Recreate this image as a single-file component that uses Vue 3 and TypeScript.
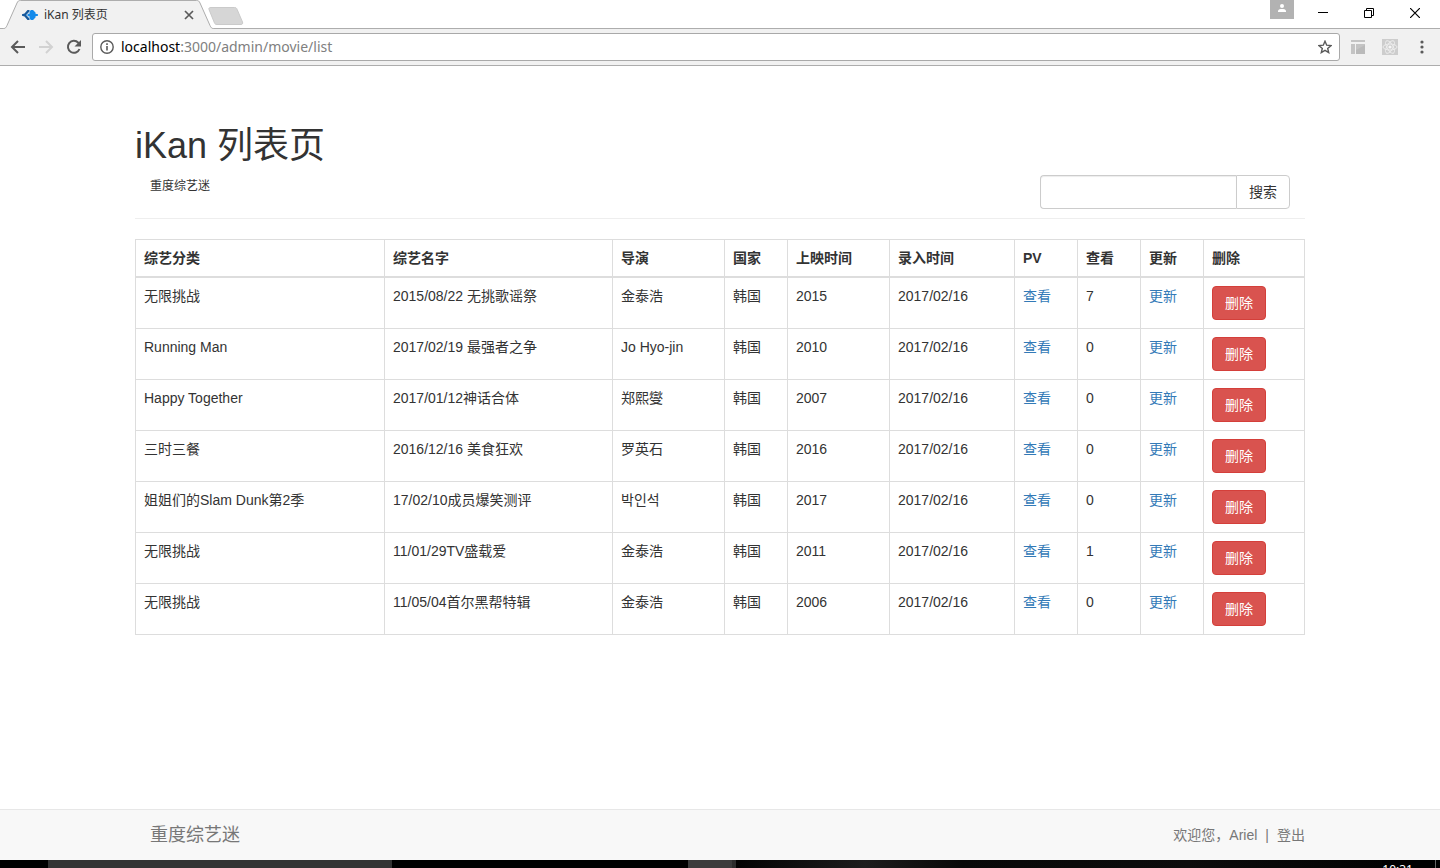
<script setup lang="ts">
import { ref } from 'vue'

interface Movie {
  id: number
  category: string
  name: string
  director: string
  country: string
  year: number
  created: string
  pv: number
}

const headings: string[] = ['综艺分类', '综艺名字', '导演', '国家', '上映时间', '录入时间', 'PV', '查看', '更新', '删除']
const columns: string[] = ['category', 'name', 'director', 'short', 'year', 'created', 'short', 'short', 'short', 'remove']

const movies = ref<Movie[]>([
  { id: 1, category: '无限挑战', name: '2015/08/22 无挑歌谣祭', director: '金泰浩', country: '韩国', year: 2015, created: '2017/02/16', pv: 7 },
  { id: 2, category: 'Running Man', name: '2017/02/19 最强者之争', director: 'Jo Hyo-jin', country: '韩国', year: 2010, created: '2017/02/16', pv: 0 },
  { id: 3, category: 'Happy Together', name: '2017/01/12神话合体', director: '郑熙燮', country: '韩国', year: 2007, created: '2017/02/16', pv: 0 },
  { id: 4, category: '三时三餐', name: '2016/12/16 美食狂欢', director: '罗英石', country: '韩国', year: 2016, created: '2017/02/16', pv: 0 },
  { id: 5, category: '姐姐们的Slam Dunk第2季', name: '17/02/10成员爆笑测评', director: '박인석', country: '韩国', year: 2017, created: '2017/02/16', pv: 0 },
  { id: 6, category: '无限挑战', name: '11/01/29TV盛载爱', director: '金泰浩', country: '韩国', year: 2011, created: '2017/02/16', pv: 1 },
  { id: 7, category: '无限挑战', name: '11/05/04首尔黑帮特辑', director: '金泰浩', country: '韩国', year: 2006, created: '2017/02/16', pv: 0 },
])

const keyword = ref('')

function removeMovie(id: number): void {
  movies.value = movies.value.filter((movie) => movie.id !== id)
}
</script>

<template>
  <div class="screen">
    <header class="browser">
      <div class="tabstrip">
        <div class="tab">
          <svg class="tab-shape" width="214" height="29" viewBox="0 0 214 29" aria-hidden="true">
            <path d="M0 28.500H3.500C5.500 28.500 6 27.500 7 25.500L17 3C18 1 18.500.5 20.500.5H196.500C198.500.5 199 1 200 3L210 25.500C211 27.500 211.500 28.500 213.500 28.500V29H0Z" fill="#f1f1f1" />
            <path d="M0 28.500H3.500C5.500 28.500 6 27.500 7 25.500L17 3C18 1 18.500.5 20.500.5H196.500C198.500.5 199 1 200 3L210 25.500C211 27.500 211.500 28.500 213.500 28.500" fill="none" stroke="#adadad" />
          </svg>
          <div class="tab-content">
            <svg width="16" height="16" viewBox="0 0 16 16" aria-hidden="true">
              <path d="M0 7.200 2.500 6.500 5.500 3H7.500V4.500L4.500 7.500V8.500L7.500 11.500V13H5.500L2.500 9.500 0 8.800Z" fill="#17599c" />
              <path d="M8.800 3H11L13.500 5.500V6.700L16 7.300V8.700L13.500 9.300V10.500L11 13H8.800L7.500 11V9.300H5.500V6.700H7.500V5Z" fill="#148aea" />
            </svg>
            <span class="tab-title">iKan 列表页</span>
            <button class="bare tab-close" type="button" aria-label="Close tab">
              <svg width="10" height="10" viewBox="0 0 10 10"><path d="m1 1 8 8M9 1 1 9" stroke="#5a5a5a" stroke-width="1.700" /></svg>
            </button>
          </div>
        </div>
        <button class="bare new-tab" type="button" aria-label="New tab">
          <svg width="36" height="18" viewBox="0 0 36 18">
            <path d="M3 .5H26.500C28 .5 28.500 1 29 2.200L34.500 15C35 16.500 34.500 17.500 33 17.500H9C7.500 17.500 7 17 6.500 16L1 2.500C.5 1.200 1.200.5 3 .5Z" fill="#d6d6d6" stroke="#cacaca" />
          </svg>
        </button>
        <div class="window-controls">
          <button class="bare profile" type="button" aria-label="Profile">
            <svg width="24" height="19" viewBox="0 0 24 19"><path d="M0 0h24v19H0Z" fill="#b2b2b2" /><circle cx="12" cy="6" r="2" fill="#fff" /><path d="M8 12V10.800C8 9.400 10.500 9 12 9s4 .4 4 1.800V12Z" fill="#fff" /></svg>
          </button>
          <button class="bare window-button" type="button" aria-label="Minimize">
            <svg width="10" height="10" viewBox="0 0 10 10"><path d="M0 4.500h10" stroke="#000" /></svg>
          </button>
          <button class="bare window-button" type="button" aria-label="Restore">
            <svg width="10" height="10" viewBox="0 0 10 10"><path d="M.5 2.500h7v7h-7ZM2.500 2.500v-2h7v7h-2" fill="none" stroke="#000" /></svg>
          </button>
          <button class="bare window-button" type="button" aria-label="Close window">
            <svg width="10" height="10" viewBox="0 0 10 10"><path d="m0 0 10 10M10 0 0 10" stroke="#000" stroke-width="1.200" /></svg>
          </button>
        </div>
      </div>

      <div class="toolbar">
        <button class="bare tool" type="button" aria-label="Back">
          <svg width="16" height="16" viewBox="0 0 16 16"><path d="M15 8H2M8 2 2 8l6 6" fill="none" stroke="#5a5a5a" stroke-width="2" /></svg>
        </button>
        <button class="bare tool" type="button" aria-label="Forward" disabled>
          <svg width="16" height="16" viewBox="0 0 16 16"><path d="M1 8h13M8 2l6 6-6 6" fill="none" stroke="#d2d2d2" stroke-width="2" /></svg>
        </button>
        <button class="bare tool" type="button" aria-label="Reload">
          <svg width="16" height="16" viewBox="0 0 16 16"><path d="M13.500 10A6 6 0 1 1 12.300 3.700L13.500 5" fill="none" stroke="#5a5a5a" stroke-width="2" /><path d="M15 1v6.500H8.500Z" fill="#5a5a5a" /></svg>
        </button>
        <div class="address">
          <svg width="14" height="14" viewBox="0 0 14 14" aria-hidden="true"><circle cx="7" cy="7" r="6.200" fill="none" stroke="#5a5a5a" stroke-width="1.400" /><path d="M6.200 6h1.600v4.500H6.200ZM6.200 3.300h1.600v1.600H6.200Z" fill="#5a5a5a" /></svg>
          <span class="url"><span class="host">localhost</span>:3000/admin/movie/list</span>
          <button class="bare star" type="button" aria-label="Bookmark">
            <svg width="14" height="14" viewBox="0 0 14 14"><path d="m7 1.200 1.700 4 4.300.4-3.300 2.800 1 4.200L7 10.400l-3.700 2.200 1-4.200L1 5.600l4.300-.4Z" fill="none" stroke="#5a5a5a" stroke-width="1.400" /></svg>
          </button>
        </div>
        <button class="bare extension" type="button" aria-label="Layout extension">
          <svg width="14" height="14" viewBox="0 0 14 14"><path d="M0 0h14v2H0ZM0 4h4v10H0ZM5 4h9v10H5Z" fill="#c4c4c4" /><path d="M5 14V10l9-5v9Z" fill="#bababa" /></svg>
        </button>
        <button class="bare extension" type="button" aria-label="React extension">
          <svg width="16" height="16" viewBox="0 0 16 16">
            <path d="M0 0h16v16H0Z" fill="#cdcdcd" />
            <g fill="none" stroke="#ececec"><ellipse cx="8" cy="8" rx="7" ry="3" /><ellipse cx="8" cy="8" rx="7" ry="3" transform="rotate(60 8 8)" /><ellipse cx="8" cy="8" rx="7" ry="3" transform="rotate(120 8 8)" /></g>
            <circle cx="8" cy="8" r="1.600" fill="#f6f6f6" />
          </svg>
        </button>
        <button class="bare extension" type="button" aria-label="Menu">
          <svg width="4" height="14" viewBox="0 0 4 14"><g fill="#5a5a5a"><circle cx="2" cy="2" r="1.600" /><circle cx="2" cy="7" r="1.600" /><circle cx="2" cy="12" r="1.600" /></g></svg>
        </button>
      </div>
    </header>

    <main class="container">
      <div class="page-header">
        <h1>iKan 列表页</h1>
        <div class="subheader">
          <small>重度综艺迷</small>
          <form class="search" @submit.prevent>
            <input v-model="keyword" type="text" aria-label="搜索" />
            <button type="submit">搜索</button>
          </form>
        </div>
      </div>

      <table>
        <colgroup>
          <col v-for="(column, index) in columns" :key="index" :class="`col-${column}`" />
        </colgroup>
        <thead>
          <tr>
            <th v-for="heading in headings" :key="heading" scope="col">{{ heading }}</th>
          </tr>
        </thead>
        <tbody>
          <tr v-for="movie in movies" :key="movie.id">
            <td>{{ movie.category }}</td>
            <td>{{ movie.name }}</td>
            <td>{{ movie.director }}</td>
            <td>{{ movie.country }}</td>
            <td>{{ movie.year }}</td>
            <td>{{ movie.created }}</td>
            <td><a href="#">查看</a></td>
            <td>{{ movie.pv }}</td>
            <td><a href="#">更新</a></td>
            <td><button class="danger" type="button" @click="removeMovie(movie.id)">删除</button></td>
          </tr>
        </tbody>
      </table>
    </main>

    <footer class="navbar">
      <div class="container navbar-inner">
        <a class="brand" href="#">重度综艺迷</a>
        <p class="welcome"><span>欢迎您，Ariel</span><span>|</span><a href="#">登出</a></p>
      </div>
    </footer>

    <div class="taskbar">
      <div class="task-start"></div>
      <div class="task-search"></div>
      <div class="task-gap"></div>
      <div class="task-active"></div>
      <div class="task-rest"></div>
      <time class="clock">10:31</time>
      <div class="show-desktop"></div>
    </div>
  </div>
</template>

<style>
body {
  margin: 0;
  background: #fff;
}
</style>

<style scoped>
* {
  box-sizing: border-box;
}

.screen {
  display: flex;
  flex-direction: column;
  min-height: 100vh;
  color: #333;
  font: 14px/20px "Liberation Sans", "Noto Sans CJK SC", sans-serif;
}

svg {
  display: block;
  flex: none;
}

.bare {
  display: flex;
  align-items: center;
  justify-content: center;
  padding: 0;
  border: 0;
  background: none;
}

.tabstrip {
  display: flex;
  height: 29px;
  background: linear-gradient(#adadad, #adadad) bottom / 100% 1px no-repeat #fff;
}

.tab {
  display: grid;
  width: 214px;
}

.tab-shape,
.tab-content {
  grid-area: 1 / 1;
}

.tab-content {
  display: flex;
  align-items: center;
  gap: 6px;
  padding: 0 20px 0 22px;
  font: 12px/16px "Noto Sans", "Noto Sans CJK SC", sans-serif;
}

.tab-close {
  margin-left: auto;
}

.new-tab {
  align-self: center;
  margin: 3px 0 0 -6px;
}

.window-controls {
  display: flex;
  align-items: flex-start;
  margin-left: auto;
  padding-right: 2px;
}

.profile {
  margin-right: 6px;
}

.window-button {
  width: 46px;
  height: 26px;
}

.toolbar {
  display: flex;
  align-items: center;
  height: 37px;
  padding-left: 4px;
  padding-right: 2px;
  border-bottom: 1px solid #adadad;
  background: #f1f1f1;
}

.tool {
  width: 28px;
  height: 28px;
}

.address {
  display: flex;
  flex: 1;
  align-items: center;
  gap: 7px;
  height: 28px;
  margin: 0 2px 0 4px;
  padding: 0 7px;
  border: 1px solid #a9a9a9;
  border-radius: 3px;
  background: #fff;
}

.url {
  color: #808080;
  font: 14px/20px "Noto Sans", sans-serif;
}

.host {
  color: #000;
}

.star {
  margin-left: auto;
}

.extension {
  width: 32px;
  height: 28px;
}

.container {
  width: 100%;
  max-width: 1200px;
  margin: 0 auto;
  padding: 0 15px;
}

main {
  flex: 1;
}

.page-header {
  margin: 60px 0 20px;
  padding-bottom: 9px;
  border-bottom: 1px solid #eee;
}

h1 {
  margin: 0 0 9px;
  font-size: 36px;
  font-weight: 400;
  line-height: 40px;
}

.subheader {
  display: flex;
  align-items: flex-start;
  justify-content: space-between;
  padding: 0 15px;
}

small {
  font-size: 12px;
  line-height: 22px;
}

.search {
  display: flex;
  width: 250px;
  height: 34px;
}

.search input {
  flex: 1;
  min-width: 0;
  padding: 6px 12px;
  border: 1px solid #ccc;
  border-right: 0;
  border-radius: 4px 0 0 4px;
  box-shadow: inset 0 1px 1px rgba(0, 0, 0, 0.075);
  color: #555;
  font: inherit;
}

.search button {
  padding: 6px 12px;
  border: 1px solid #ccc;
  border-radius: 0 4px 4px 0;
  background: #fff;
  color: #333;
  font: inherit;
}

table {
  width: 100%;
  margin-bottom: 20px;
  border-collapse: collapse;
  table-layout: fixed;
}

.col-name {
  width: 228px;
}

.col-director {
  width: 112px;
}

.col-short {
  width: 63px;
}

.col-year {
  width: 102px;
}

.col-created {
  width: 125px;
}

.col-remove {
  width: 101px;
}

th,
td {
  padding: 8px;
  border: 1px solid #ddd;
  text-align: left;
  vertical-align: top;
}

th {
  border-bottom-width: 2px;
}

td a {
  color: #337ab7;
  text-decoration: none;
}

.danger {
  display: block;
  padding: 6px 12px;
  border: 1px solid #d43f3a;
  border-radius: 4px;
  background: #d9534f;
  color: #fff;
  font: inherit;
}

.navbar {
  border-top: 1px solid #e7e7e7;
  background: #f8f8f8;
  color: #777;
}

.navbar a {
  color: #777;
  text-decoration: none;
}

.navbar-inner {
  display: flex;
  align-items: center;
  justify-content: space-between;
  height: 50px;
}

.brand {
  padding-left: 15px;
  font-size: 18px;
}

.welcome {
  display: flex;
  gap: 8px;
  margin: 0;
}

.taskbar {
  display: flex;
  height: 8px;
  overflow: hidden;
  background: #000;
}

.task-start {
  width: 48px;
}

.task-search {
  width: 344px;
  background: #333;
}

.task-gap {
  width: 296px;
}

.task-active {
  width: 48px;
  border-right: 4px solid #2d2d2d;
  background: #3c3c3c;
}

.task-rest {
  flex: 1;
  background: linear-gradient(90deg, #030303, #1d1d1d 20%, #080808 35%, #0c0c0c 70%, #030303);
}

.clock {
  padding-top: 2px;
  color: #fff;
  font: 12px/16px "Noto Sans", sans-serif;
}

.show-desktop {
  width: 5px;
  margin-left: 22px;
  border-left: 1px solid #666;
}
</style>
